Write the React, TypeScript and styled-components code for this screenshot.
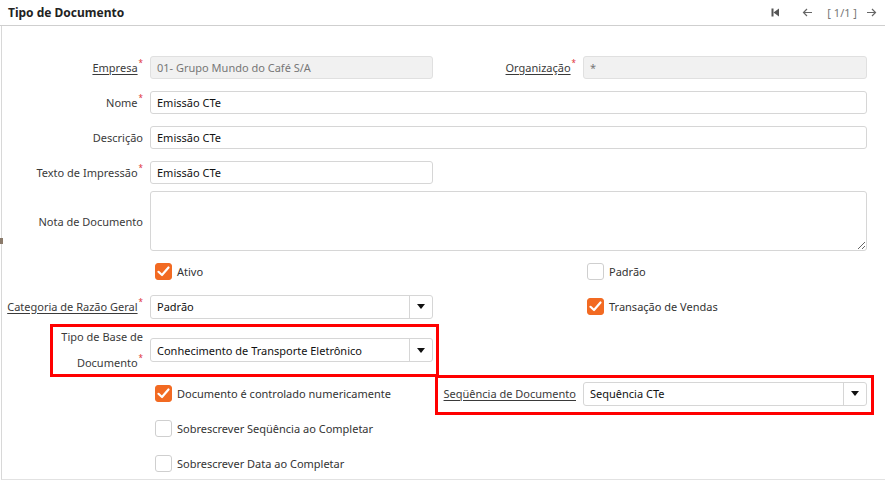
import React from "react";
import styled, { createGlobalStyle } from "styled-components";

const GlobalStyle = createGlobalStyle`
  body {
    margin: 0;
    background: #fff;
    font-family: "Noto Sans", "Open Sans", sans-serif;
    font-size: 11px;
    color: #333;
  }
`;

const Panel = styled.div`
  width: 885px;
  height: 482px;
  box-sizing: border-box;
  overflow: hidden;
`;

const Header = styled.div`
  height: 26px;
  box-sizing: border-box;
  border-bottom: 1px solid #cfcfcf;
  display: flex;
  align-items: center;
  padding: 0 8px 1px 8px;
`;

const Title = styled.div`
  font-weight: 700;
  font-size: 12px;
  color: #222;
  flex: 1;
`;

const Nav = styled.div`
  display: flex;
  align-items: center;
  color: #777;
  font-size: 11px;
`;

const NavButton = styled.span<{ $gap?: number }>`
  display: flex;
  align-items: center;
  margin-left: ${(p) => p.$gap ?? 0}px;
`;

const Body = styled.div`
  position: relative;
  margin-left: 1px;
  border-left: 1px solid #d8d8d8;
  border-bottom: 1px solid #e2e2e2;
  height: 454px;
  box-sizing: border-box;
  padding-top: 24px;
`;

const Row = styled.div<{ $h: number; $top?: boolean }>`
  display: grid;
  grid-template-columns: 148px 283px 150px 284px;
  height: ${(p) => p.$h}px;
  align-items: ${(p) => (p.$top ? "start" : "center")};
`;

const Label = styled.div<{ $lh?: number; $mt?: number }>`
  text-align: right;
  padding-right: 7px;
  margin-top: ${(p) => p.$mt ?? 0}px;
  color: #3a3a3a;
  line-height: ${(p) => p.$lh ?? 14}px;
  white-space: nowrap;
`;

const LinkText = styled.span`
  text-decoration: underline;
  text-underline-offset: 2px;
`;

const Req = styled.sup`
  color: #e0303a;
  font-size: 8px;
  margin-left: 1px;
  line-height: 0;
  vertical-align: 6px;
`;

const Input = styled.div<{ $disabled?: boolean; $wide?: boolean }>`
  grid-column: ${(p) => (p.$wide ? "2 / span 3" : "auto")};
  height: 23px;
  box-sizing: border-box;
  border: 1px solid ${(p) => (p.$disabled ? "#e0e0e0" : "#d6d6d6")};
  border-radius: 3px;
  background: ${(p) => (p.$disabled ? "#f1f1f1" : "#fff")};
  color: ${(p) => (p.$disabled ? "#777" : "#111")};
  display: flex;
  align-items: center;
  padding-left: 6px;
`;

const TextArea = styled.textarea`
  grid-column: 2 / span 3;
  margin-top: 1px;
  height: 60px;
  box-sizing: border-box;
  border: 1px solid #d6d6d6;
  border-radius: 3px;
  resize: both;
  font: inherit;
  outline: none;
`;

const SelectBox = styled.div`
  height: 24px;
  box-sizing: border-box;
  border: 1px solid #d6d6d6;
  border-radius: 3px;
  background: #fff;
  color: #111;
  display: flex;
  align-items: stretch;
`;

const SelectValue = styled.div`
  flex: 1;
  display: flex;
  align-items: center;
  padding-left: 6px;
`;

const SelectArrow = styled.div`
  width: 22px;
  border-left: 1px solid #d6d6d6;
  display: flex;
  align-items: center;
  justify-content: center;
  &::after {
    content: "";
    border-left: 4.5px solid transparent;
    border-right: 4.5px solid transparent;
    border-top: 5px solid #111;
  }
`;

const Check = styled.label<{ $offset?: number }>`
  display: flex;
  align-items: center;
  gap: 5px;
  margin-left: ${(p) => p.$offset ?? 5}px;
  color: #333;
  white-space: nowrap;
`;

const Box = styled.span<{ $on?: boolean }>`
  width: 17px;
  height: 17px;
  box-sizing: border-box;
  border-radius: 3px;
  border: 1px solid ${(p) => (p.$on ? "#f26a22" : "#cfcfcf")};
  background: ${(p) => (p.$on ? "#f26a22" : "#fff")};
  display: flex;
  align-items: center;
  justify-content: center;
`;

const Highlight = styled.div<{ $x: number; $y: number; $w: number; $h: number }>`
  position: absolute;
  left: ${(p) => p.$x}px;
  top: ${(p) => p.$y}px;
  width: ${(p) => p.$w}px;
  height: ${(p) => p.$h}px;
  box-sizing: border-box;
  border: 3px solid #ff0000;
  pointer-events: none;
`;

const Grip = styled.div`
  position: absolute;
  left: -2px;
  top: 212px;
  width: 3px;
  height: 6px;
  background: #8a7a6a;
`;

const Tick = () => (
  <svg width="13" height="11" viewBox="0 0 13 11">
    <path d="M1.5 5.8 L5 9 L11.5 1.5" fill="none" stroke="#fff" strokeWidth="2.2" strokeLinecap="round" strokeLinejoin="round" />
  </svg>
);

const CheckItem = ({ on, text, offset }: { on?: boolean; text: string; offset?: number }) => (
  <Check $offset={offset}>
    <Box $on={on}>{on && <Tick />}</Box>
    {text}
  </Check>
);

const Select = ({ value }: { value: string }) => (
  <SelectBox>
    <SelectValue>{value}</SelectValue>
    <SelectArrow />
  </SelectBox>
);

const Empty = styled.div``;

export default function App() {
  return (
    <Panel>
      <GlobalStyle />
      <Header>
        <Title>Tipo de Documento</Title>
        <Nav>
          <NavButton>
            <svg width="9" height="9" viewBox="0 0 9 9">
              <rect x="0.5" y="0.5" width="2" height="8" fill="#555" />
              <path d="M8 0.5 L2.5 4.5 L8 8.5 Z" fill="#555" />
            </svg>
          </NavButton>
          <NavButton $gap={22}>
            <svg width="11" height="9" viewBox="0 0 11 9">
              <path d="M10 4.5 H1.5 M5 1 L1.5 4.5 L5 8" fill="none" stroke="#666" strokeWidth="1.2" />
            </svg>
          </NavButton>
          <NavButton $gap={14}>[ 1/1 ]</NavButton>
          <NavButton $gap={9}>
            <svg width="11" height="9" viewBox="0 0 11 9">
              <path d="M1 4.5 H9.5 M6 1 L9.5 4.5 L6 8" fill="none" stroke="#666" strokeWidth="1.2" />
            </svg>
          </NavButton>
        </Nav>
      </Header>
      <Body>
        <Grip />
        <Row $h={35}>
          <Label>
            <LinkText>Empresa</LinkText>
            <Req>*</Req>
          </Label>
          <Input $disabled>01- Grupo Mundo do Café S/A</Input>
          <Label>
            <LinkText>Organização</LinkText>
            <Req>*</Req>
          </Label>
          <Input $disabled>*</Input>
        </Row>
        <Row $h={35}>
          <Label>
            Nome<Req>*</Req>
          </Label>
          <Input $wide>Emissão CTe</Input>
        </Row>
        <Row $h={35}>
          <Label>Descrição</Label>
          <Input $wide>Emissão CTe</Input>
        </Row>
        <Row $h={35}>
          <Label>
            Texto de Impressão<Req>*</Req>
          </Label>
          <Input>Emissão CTe</Input>
        </Row>
        <Row $h={64} $top>
          <Label $mt={25}>Nota de Documento</Label>
          <TextArea />
        </Row>
        <Row $h={35}>
          <Empty />
          <CheckItem on text="Ativo" />
          <Empty />
          <CheckItem text="Padrão" offset={4} />
        </Row>
        <Row $h={35}>
          <Label>
            <LinkText>Categoria de Razão Geral</LinkText>
            <Req>*</Req>
          </Label>
          <Select value="Padrão" />
          <Empty />
          <CheckItem on text="Transação de Vendas" offset={4} />
        </Row>
        <Row $h={52}>
          <Label $lh={26}>
            Tipo de Base de
            <br />
            Documento<Req>*</Req>
          </Label>
          <Select value="Conhecimento de Transporte Eletrônico" />
        </Row>
        <Row $h={35}>
          <Empty />
          <CheckItem on text="Documento é controlado numericamente" />
          <Label>
            <LinkText>Seqüência de Documento</LinkText>
          </Label>
          <Select value="Sequência CTe" />
        </Row>
        <Row $h={35}>
          <Empty />
          <CheckItem text="Sobrescrever Seqüência ao Completar" />
        </Row>
        <Row $h={35}>
          <Empty />
          <CheckItem text="Sobrescrever Data ao Completar" />
        </Row>
        <Highlight $x={48} $y={298} $w={389} $h={53} />
        <Highlight $x={433} $y={349} $w={439} $h={40} />
      </Body>
    </Panel>
  );
}
